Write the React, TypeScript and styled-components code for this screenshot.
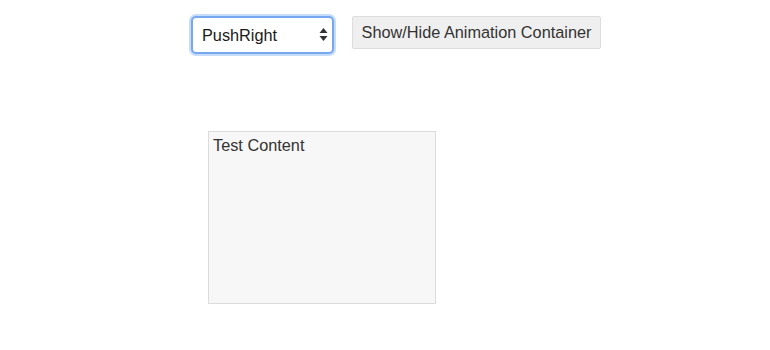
import styled, { createGlobalStyle } from "styled-components";

const GlobalStyle = createGlobalStyle`
    body {
        margin: 0;
        background: #ffffff;
        font-family: "Liberation Sans", Arial, sans-serif;
        color: #333333;
    }
`

const Page = styled.div`
    display: flex;
    flex-direction: column;
    padding: 16px 0 0 191px;
`

const Toolbar = styled.div`
    display: flex;
    align-items: flex-start;
    gap: 18px;
`

const SelectWrap = styled.div`
    position: relative;
    width: 143px;
    height: 38px;
`

const Select = styled.select`
    appearance: none;
    -webkit-appearance: none;
    box-sizing: border-box;
    width: 100%;
    height: 100%;
    padding: 0 28px 0 9px;
    font-family: "Liberation Sans", Arial, sans-serif;
    font-size: 16.3px;
    color: #1a1a1a;
    background: #ffffff;
    border: 2px solid #76a8f0;
    border-radius: 5px;
    box-shadow: 0 0 0 2px #c6dcfb;
    outline: none;
`

const Arrows = styled.svg`
    position: absolute;
    right: 6px;
    top: 12px;
    pointer-events: none;
`

const Button = styled.button`
    box-sizing: border-box;
    width: 249px;
    height: 33px;
    padding: 0 4px;
    white-space: nowrap;
    font-family: "Liberation Sans", Arial, sans-serif;
    font-size: 16.3px;
    color: #333333;
    background: #efefef;
    border: 1px solid #dddddd;
    border-radius: 2px;
`

const Container = styled.div`
    box-sizing: border-box;
    width: 228px;
    height: 173px;
    margin: 77px 0 0 17px;
    padding: 3px 4px;
    font-size: 16.3px;
    line-height: 20px;
    color: #333333;
    background: #f7f7f7;
    border: 1px solid #dcdcdc;
`

export default function App() {
    return (
        <>
            <GlobalStyle />
            <Page>
                <Toolbar>
                    <SelectWrap>
                        <Select defaultValue="PushRight">
                            <option>PushLeft</option>
                            <option>PushRight</option>
                            <option>PushUp</option>
                            <option>PushDown</option>
                        </Select>
                        <Arrows width="9" height="14" viewBox="0 0 9 14">
                            <path d="M4.5 0 L8.5 5 L0.5 5 Z" fill="#333" />
                            <path d="M0.5 8 L8.5 8 L4.5 13 Z" fill="#333" />
                        </Arrows>
                    </SelectWrap>
                    <Button>Show/Hide Animation Container</Button>
                </Toolbar>
                <Container>Test Content</Container>
            </Page>
        </>
    )
}
